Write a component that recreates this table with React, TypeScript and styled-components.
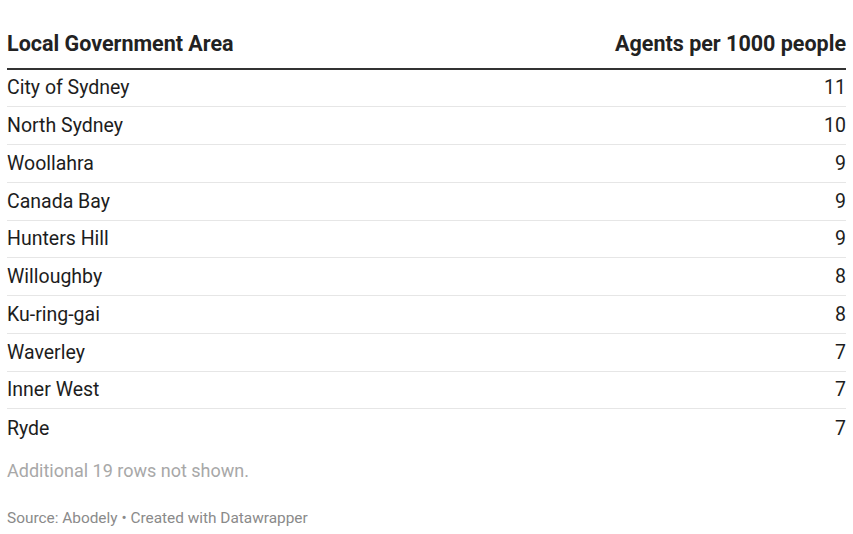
import React from 'react';
import styled, { createGlobalStyle } from 'styled-components';

const GlobalStyle = createGlobalStyle`
  body {
    margin: 0;
    background: #ffffff;
    font-family: Roboto, 'Liberation Sans', sans-serif;
    color: #1d1d1d;
  }
`;

const StyledPage = styled.div`
  width: 853px;
  padding: 0 7px;
  box-sizing: border-box;
`;

const StyledTable = styled.div`
  display: flex;
  flex-direction: column;
`;

const StyledHeader = styled.div`
  display: flex;
  justify-content: space-between;
  align-items: flex-end;
  height: 69.5px;
  padding-bottom: 12px;
  box-sizing: border-box;
  border-bottom: 2px solid #333333;
  font-size: 21.5px;
  font-weight: 700;
  color: #222222;
`;

const StyledRow = styled.div<{ last?: boolean }>`
  display: flex;
  justify-content: space-between;
  align-items: center;
  height: 37.75px;
  box-sizing: border-box;
  border-bottom: ${(p) => (p.last ? 'none' : '1px solid #e6e6e6')};
  font-size: 19.5px;
  color: #1d1d1d;
`;

const StyledValue = styled.span`
  font-variant-numeric: tabular-nums;
`;

const StyledNote = styled.div`
  margin-top: 13px;
  font-size: 18px;
  line-height: 21px;
  color: #a8a8a8;
`;

const StyledSource = styled.div`
  margin-top: 28px;
  font-size: 15.4px;
  line-height: 18px;
  color: #8a8a8a;
`;

const rows: [string, number][] = [
  ['City of Sydney', 11],
  ['North Sydney', 10],
  ['Woollahra', 9],
  ['Canada Bay', 9],
  ['Hunters Hill', 9],
  ['Willoughby', 8],
  ['Ku-ring-gai', 8],
  ['Waverley', 7],
  ['Inner West', 7],
  ['Ryde', 7],
];

function App() {
  return (
    <StyledPage>
      <GlobalStyle />
      <StyledTable>
        <StyledHeader>
          <span>Local Government Area</span>
          <span>Agents per 1000 people</span>
        </StyledHeader>
        {rows.map(([name, value], i) => (
          <StyledRow key={name} last={i === rows.length - 1}>
            <span>{name}</span>
            <StyledValue>{value}</StyledValue>
          </StyledRow>
        ))}
      </StyledTable>
      <StyledNote>Additional 19 rows not shown.</StyledNote>
      <StyledSource>Source: Abodely • Created with Datawrapper</StyledSource>
    </StyledPage>
  );
}

export default App;
